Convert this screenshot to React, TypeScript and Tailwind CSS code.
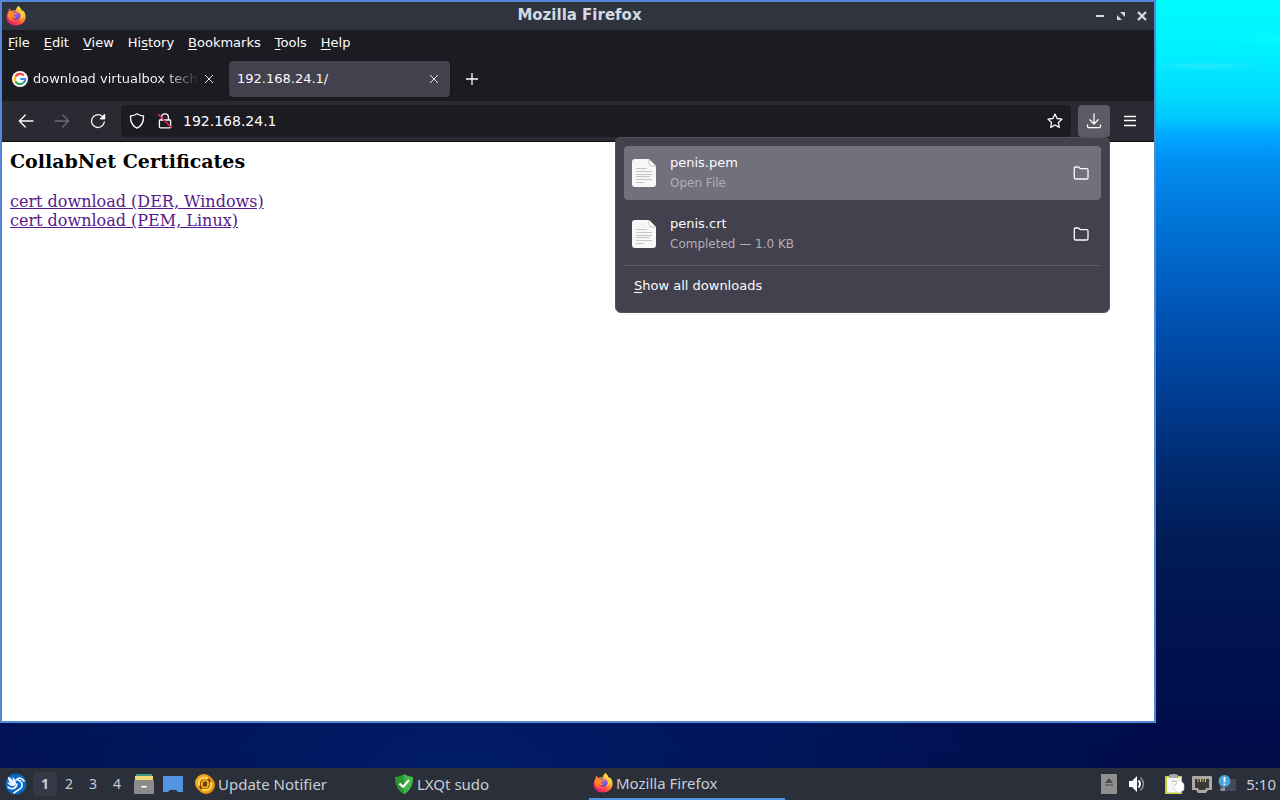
import { useState } from "react";

type Download = { name: string; status: string };

const menus = [
  { before: "", key: "F", after: "ile" },
  { before: "", key: "E", after: "dit" },
  { before: "", key: "V", after: "iew" },
  { before: "Hi", key: "s", after: "tory" },
  { before: "", key: "B", after: "ookmarks" },
  { before: "", key: "T", after: "ools" },
  { before: "", key: "H", after: "elp" },
];

const downloads: Download[] = [
  { name: "penis.pem", status: "Open File" },
  { name: "penis.crt", status: "Completed — 1.0 KB" },
];

function FirefoxLogo({ className }: { className: string }) {
  return (
    <svg viewBox="0 0 40 40" className={className} aria-hidden="true">
      <defs>
        <linearGradient id="flame" x1="0.85" y1="0.1" x2="0.2" y2="0.95">
          <stop offset="0.05" stopColor="#fff04a" />
          <stop offset="0.35" stopColor="#ffa42c" />
          <stop offset="0.65" stopColor="#ff4f42" />
          <stop offset="1" stopColor="#e6187a" />
        </linearGradient>
        <radialGradient id="globe" cx="0.6" cy="0.3" r="0.8">
          <stop offset="0" stopColor="#a65cf5" />
          <stop offset="1" stopColor="#5b45c8" />
        </radialGradient>
      </defs>
      <path
        d="M25 0c3 3 5 6 6 10l3-1c4 4 6 9 5 15-1 9-9 15-19 15C9 39 1 32 1 22c0-5 2-8 4-11l1-6c2 1 3 4 4 5 3-2 7-2 10-1 0-4 2-7 5-9z"
        fill="url(#flame)"
      />
      <path d="M13 12c3-2 7-2 9 1l4 1c4 3 4 8 1 11-4 4-11 3-12-2l-2-5 3-3-3-3z" fill="url(#globe)" />
      <path d="M6 11c3-2 7 0 9 2 2 0 6-1 7 2-1 2-5 2-6 3 0 3 3 3 5 4-3 4-8 2-11-1 0 5 4 9 10 9-8 2-16-4-16-11 0-3 1-6 2-8z" fill="#ff8a2a" />
      <path d="M25 0c-2 7 4 9 5 15 1 4 0 8-3 11 8-1 10-9 5-15-1-4-4-8-7-11z" fill="#ffd23c" />
    </svg>
  );
}

function GoogleLogo() {
  return (
    <svg viewBox="0 0 16 16" className="size-4 shrink-0" aria-hidden="true">
      <circle cx="8" cy="8" r="8" fill="#fff" />
      <g fill="none" strokeWidth="2.2">
        <path d="M11.8 4.4A5.2 5.2 0 0 0 3.5 5.4" stroke="#ea4335" />
        <path d="M3.5 5.4a5.2 5.2 0 0 0 0 5.2" stroke="#fbbc05" />
        <path d="M3.500 10.600a5.200 5.200 0 0 0 8 1.200" stroke="#34a853" />
        <path d="M11.500 11.800A5.200 5.200 0 0 0 13.200 8H8.200" stroke="#4285f4" />
      </g>
    </svg>
  );
}

function CloseIcon() {
  return (
    <svg viewBox="0 0 8 8" className="size-2" aria-hidden="true">
      <path d="M0 0l8 8M8 0L0 8" stroke="#e4e4ea" />
    </svg>
  );
}

function ToolbarIcon({ children }: { children: React.ReactNode }) {
  return (
    <svg
      viewBox="0 0 16 16"
      className="size-4"
      fill="none"
      stroke="currentColor"
      strokeWidth="1.3"
      strokeLinecap="round"
      strokeLinejoin="round"
      aria-hidden="true"
    >
      {children}
    </svg>
  );
}

function FileIcon() {
  return (
    <svg viewBox="0 0 24 28" className="h-7 w-6 shrink-0" aria-hidden="true">
      <path d="M3 0h14l7 7v18a3 3 0 0 1-3 3H3a3 3 0 0 1-3-3V3a3 3 0 0 1 3-3z" fill="#f7f7f7" />
      <path d="M17 0v4a3 3 0 0 0 3 3h4z" fill="#fff" stroke="#a9a9ad" strokeWidth="0.7" />
      <path d="M4 9.500h11M4 12.500h16M4 15.500h16M4 17.500h14M4 20.500h16M4 23.500h8" stroke="#c5c5c8" />
    </svg>
  );
}

function TitleBar() {
  return (
    <header className="flex h-7 items-center bg-[#2f343f] pr-0.5 pl-1 text-[#d3dae3]">
      <FirefoxLogo className="size-5" />
      <h1 className="flex-1 pb-0.5 pl-11 text-center font-['DejaVu_Sans',sans-serif] text-[15px] leading-5 font-bold">Mozilla Firefox</h1>
      <button type="button" aria-label="Minimize" className="flex h-5 w-[21px] items-center justify-center">
        <svg viewBox="0 0 10 10" className="size-2.5"><path d="M1 5h8" stroke="currentColor" strokeWidth="2" /></svg>
      </button>
      <button type="button" aria-label="Restore" className="flex h-5 w-[21px] items-center justify-center">
        <svg viewBox="0 0 10 10" className="size-2.5"><path d="M4 1h5v5zM1 4v5h5z" fill="currentColor" /></svg>
      </button>
      <button type="button" aria-label="Close window" className="flex h-5 w-[21px] items-center justify-center">
        <svg viewBox="0 0 10 10" className="size-2.5"><path d="M1 1l8 8M9 1L1 9" stroke="currentColor" strokeWidth="2.4" /></svg>
      </button>
    </header>
  );
}

function MenuBar() {
  return (
    <nav className="flex h-[26px] items-center gap-3.5 px-1.5 text-[13px] leading-4">
      {menus.map((m) => (
        <button type="button" key={m.key + m.after}>
          {m.before}
          <span className="underline underline-offset-2">{m.key}</span>
          {m.after}
        </button>
      ))}
    </nav>
  );
}

function TabStrip() {
  return (
    <div className="flex gap-1 px-0.5 pt-[5px] pb-1 text-[13px] leading-5">
      <div className="flex h-9 w-[221px] items-center pl-2">
        <GoogleLogo />
        <button
          type="button"
          className="ml-[5px] w-[166px] overflow-hidden bg-linear-to-r from-[#fbfbfe] from-80% to-transparent bg-clip-text text-left whitespace-nowrap text-transparent"
        >
          download virtualbox tech
        </button>
        <button type="button" aria-label="Close tab" className="flex w-5 justify-center"><CloseIcon /></button>
      </div>
      <div className="flex h-9 w-[221px] items-center justify-between rounded-sm bg-[#42414d] pr-1.5 pl-2 shadow-[0_0_2px_#0006]">
        <button type="button" className="flex-1 text-left">192.168.24.1/</button>
        <button type="button" aria-label="Close tab" className="flex w-5 justify-center"><CloseIcon /></button>
      </div>
      <button type="button" aria-label="New tab" className="flex size-9 items-center justify-center">
        <svg viewBox="0 0 12 12" className="size-3"><path d="M6 0v12M0 6h12" stroke="#fbfbfe" strokeWidth="1.3" /></svg>
      </button>
    </div>
  );
}

function DownloadsPanel() {
  return (
    <div className="absolute top-8 right-0 z-10 w-[495px] rounded-md border border-[#52525e] bg-[#42414d] p-2 text-[13px]">
      <ul className="flex flex-col gap-[7px]">
        {downloads.map((d, i) => (
          <li key={d.name} className={`flex h-[54px] items-center rounded-sm px-2 ${i === 0 ? "bg-[#72707b]" : ""}`}>
            <FileIcon />
            <button type="button" className="ml-3.5 flex-1 text-left">
              <span className="block leading-5">{d.name}</span>
              <span className="block text-xs leading-5 text-[#b0afb8]">{d.status}</span>
            </button>
            <button type="button" aria-label={`Show ${d.name} in folder`} className="flex w-6 justify-center">
              <ToolbarIcon>
                <path d="M1.300 12.700V3a1 1 0 0 1 1-1h3.200l2 1.700h6.200a1.300 1.300 0 0 1 1.300 1.300v7.700a1.300 1.300 0 0 1-1.300 1.300H2.600a1.300 1.300 0 0 1-1.300-1.300z" />
              </ToolbarIcon>
            </button>
          </li>
        ))}
      </ul>
      <hr className="mt-1 border-[#5b5b66]" />
      <button type="button" className="mt-0.5 flex h-9 w-full items-center px-2.5">
        <span className="underline underline-offset-2">S</span>how all downloads
      </button>
    </div>
  );
}

function Toolbar() {
  const [address, setAddress] = useState("192.168.24.1");
  const [open, setOpen] = useState(true);

  return (
    <div className="flex h-[41px] items-start border-b border-[#0c0c0d] bg-[#2b2a33] px-2 pt-1">
      <div className="flex gap-1">
        <button type="button" aria-label="Back" className="flex size-8 items-center justify-center">
          <ToolbarIcon><path d="M15 8H1.300M7.300 2l-6 6 6 6" /></ToolbarIcon>
        </button>
        <button type="button" aria-label="Forward" className="flex size-8 items-center justify-center text-[#6b6a74]">
          <ToolbarIcon><path d="M1 8h13.700M8.700 2l6 6-6 6" /></ToolbarIcon>
        </button>
        <button type="button" aria-label="Reload" className="flex size-8 items-center justify-center">
          <ToolbarIcon>
            <path d="M14.300 9A6.400 6.400 0 1 1 12 3.100l1.600 1.500" />
            <path d="M14.600 1.800v4h-4z" fill="currentColor" />
          </ToolbarIcon>
        </button>
      </div>
      <div className="ml-[7px] flex h-8 flex-1 items-center gap-2.5 rounded-sm bg-[#1c1b22] px-2">
        <div className="flex gap-3">
          <ToolbarIcon>
            <path d="M8 .8c2 1.500 4.200 2 6.500 2.200.3 5.500-1.500 9.800-6.500 12.200C3 12.800 1.200 8.500 1.500 3 3.800 2.800 6 2.300 8 .8z" />
          </ToolbarIcon>
          <ToolbarIcon>
            <path d="M4.600 7V4.200a3.400 3.400 0 0 1 6.800 0V7M3.200 7h9.600a.8.8 0 0 1 .8.8v6a1 1 0 0 1-1 1H3.400a1 1 0 0 1-1-1v-6a.8.8 0 0 1 .8-.8z" />
            <path d="M1.500 1.500l13 13" stroke="#e22850" strokeWidth="1.600" />
          </ToolbarIcon>
        </div>
        <input
          type="text"
          aria-label="Address"
          value={address}
          onChange={(e) => setAddress(e.target.value)}
          className="min-w-0 flex-1 bg-transparent text-sm outline-none"
        />
        <button type="button" aria-label="Bookmark this page">
          <ToolbarIcon>
            <path d="M8 1l2.100 4.500 4.900.6-3.600 3.400.9 4.900L8 12l-4.300 2.400.9-4.900L1 6.100l4.900-.6z" />
          </ToolbarIcon>
        </button>
      </div>
      <div className="relative ml-[7px]">
        <button
          type="button"
          aria-label="Downloads"
          aria-expanded={open}
          onClick={() => setOpen(!open)}
          className="flex size-8 items-center justify-center rounded-sm bg-[#5b5b66]"
        >
          <ToolbarIcon><path d="M8 .8v10M3.800 6.800L8 11l4.200-4.200M1.500 11.800v1.400a1.500 1.500 0 0 0 1.500 1.500h10a1.500 1.500 0 0 0 1.500-1.500v-1.400" /></ToolbarIcon>
        </button>
        {open && <DownloadsPanel />}
      </div>
      <button type="button" aria-label="Application menu" className="ml-1 flex size-8 items-center justify-center">
        <svg viewBox="0 0 12 12" className="size-3"><path d="M0 1.500h12M0 5.500h12M0 10.500h12" stroke="#fbfbfe" strokeWidth="1.300" /></svg>
      </button>
    </div>
  );
}

function Taskbar() {
  return (
    <footer className="flex h-8 items-center bg-[#2b2f3a] font-['Noto_Sans',sans-serif] text-[15px] leading-5 text-[#c8ced8]">
      <button type="button" aria-label="Application launcher" className="ml-[5px]">
        <svg viewBox="0 0 22 22" className="size-[22px]">
          <circle cx="11" cy="11" r="10.500" fill="#0968c4" />
          <path d="M3 4c2 0 4 2 5 4 0-2 0-3-1-4 3 1 4 4 4 7-1 2-2 2-4 2-2 0-4-2-5-4l3 1C4 9 3 7 3 4z" fill="#eef6ff" />
          <path d="M11 7c3-3 6-2 8 1M13 7c4 1 5 5 3 8-2 2-5 3-7 5M3 14c3 3 8 2 9-3" fill="none" stroke="#eef6ff" strokeWidth="1.700" strokeLinecap="round" />
        </svg>
      </button>
      <div className="ml-1.5 flex text-sm">
        {[1, 2, 3, 4].map((n) => (
          <button type="button" key={n} className={`h-6 w-6 rounded-sm ${n === 1 ? "bg-[#353946] font-bold" : ""}`}>
            {n}
          </button>
        ))}
      </div>
      <button type="button" aria-label="File manager" className="ml-1">
        <svg viewBox="0 0 22 22" className="size-[22px]">
          <path d="M3 1h16v4H3z" fill="#3c9d85" />
          <path d="M2 3h18v5H2z" fill="#f3d877" />
          <path d="M1 8l2-1h16l2 1v12a1 1 0 0 1-1 1H2a1 1 0 0 1-1-1z" fill="#8b8b8b" />
          <path d="M8 12.500h6v2.500H8z" fill="#fff" stroke="#777" strokeWidth="0.600" />
        </svg>
      </button>
      <button type="button" aria-label="Show desktop" className="ml-[7px]">
        <svg viewBox="0 0 22 22" className="size-[22px]">
          <path d="M1 3h20v16H1z" fill="#5294e2" />
          <path d="M6 19l2-2h6l2 2z" fill="#2b2f3a" />
        </svg>
      </button>
      <nav className="ml-[7px] flex h-full gap-[3px]">
        <button type="button" className="flex w-[196px] items-center gap-[3px] px-1">
          <svg viewBox="0 0 20 20" className="size-5" aria-hidden="true">
            <circle cx="9" cy="9" r="7.500" fill="none" stroke="#f5a81c" strokeWidth="3" />
            <circle cx="11" cy="11" r="7.500" fill="none" stroke="#e8940c" strokeWidth="3" />
            <circle cx="10" cy="10" r="6.500" fill="#6b400a" />
            <g fill="none" strokeLinecap="round">
              <path d="M4 11V9a5 5 0 0 1 5-5h3M16 9v2a5 5 0 0 1-5 5H8" stroke="#ffd45c" strokeWidth="2.400" />
              <path d="M8 13.500a2 2 0 0 1-1-2V9a2.500 2.500 0 0 1 2.500-2.500H12M12 6.500a2 2 0 0 1 1 2V11a2.500 2.500 0 0 1-2.500 2.500H8" stroke="#f5a81c" strokeWidth="2" />
            </g>
          </svg>
          Update Notifier
        </button>
        <button type="button" className="flex w-[196px] items-center gap-[3px] px-1">
          <svg viewBox="0 0 20 20" className="size-5" aria-hidden="true">
            <path d="M10 0c3 2 6 3 9 3 0 8-3 14-9 17C4 17 1 11 1 3c3 0 6-1 9-3z" fill="#2d9437" />
            <path d="M10 0v20c6-3 9-9 9-17-3 0-6-1-9-3z" fill="#43b64b" />
            <path d="M5.500 9.500l3.500 3.500L15 6" stroke="#fff" strokeWidth="2.200" fill="none" />
          </svg>
          LXQt sudo
        </button>
        <button type="button" className="flex w-[196px] items-center gap-[3px] border-b-2 border-[#5294e2] px-1">
          <FirefoxLogo className="size-5" />
          Mozilla Firefox
        </button>
      </nav>
      <div className="ml-auto flex items-center pr-1">
        <button type="button" aria-label="Removable media">
          <svg viewBox="0 0 16 20" className="h-5 w-4">
            <path d="M0 0h16v20H0z" fill="#8f8f8f" />
            <path d="M4 9l4-5 4 5zM4 10.500h8v1H4z" fill="#4b4b4b" />
          </svg>
        </button>
        <button type="button" aria-label="Volume" className="ml-3">
          <svg viewBox="0 0 16 16" className="size-4">
            <path d="M0 5h3l5-5v16l-5-5H0z" fill="#fff" />
            <path d="M9.500 4.500q3 3.500 0 7" stroke="#fff" strokeWidth="2" fill="none" />
            <path d="M11.500 1.500q6 6.500 0 13" stroke="#8b8f97" strokeWidth="1.500" fill="none" />
          </svg>
        </button>
        <button type="button" aria-label="Clipboard" className="ml-5">
          <svg viewBox="0 0 20 20" className="size-5">
            <path d="M0 2h17v18H0z" fill="#c2ce3a" />
            <path d="M2 3.500h14v15H2z" fill="#f8f8f3" />
            <path d="M4 1l3-1h3l3 1v3H4z" fill="#a6aaa8" />
            <path d="M7 7l8-1 4 4v6l-5 3-4-3z" fill="#fff" stroke="#c8c8c8" strokeWidth="0.600" />
            <path d="M7 7l5 1-2 4" fill="none" stroke="#bbb" />
          </svg>
        </button>
        <button type="button" aria-label="Network" className="ml-[7px]">
          <svg viewBox="0 0 20 20" className="size-5">
            <path d="M1 2h18a1 1 0 0 1 1 1v13h-4l-2 3H6l-2-3H0V3a1 1 0 0 1 1-1z" fill="#aaa9a7" />
            <path d="M3 5h14v9h-3l-1 2H7l-1-2H3z" fill="#3a3936" />
            <path d="M6 5v3M8.500 5v3M11 5v3M13.500 5v3" stroke="#e0c878" />
          </svg>
        </button>
        <button type="button" aria-label="Notifications" className="ml-1.5">
          <svg viewBox="0 0 20 20" className="size-5">
            <path d="M2 5h16v12H2z" fill="#424956" />
            <path d="M2 15l5-3v5H3z" fill="#8c929b" />
            <circle cx="6.500" cy="7" r="6" fill="#4ba3dd" />
            <path d="M6.500 3v5M6.500 9.500v1.500" stroke="#fff" strokeWidth="1.800" />
          </svg>
        </button>
        <time className="ml-2">5:10</time>
      </div>
    </footer>
  );
}

export default function App() {
  return (
    <div className="flex h-screen flex-col bg-[#000c46]">
      <div className="flex min-h-0 flex-1 bg-[radial-gradient(60px_5px_at_94%_66px,#60ecff66,transparent),radial-gradient(110px_7px_at_100%_38px,#00ffff99,transparent),radial-gradient(700px_260px_at_36%_100%,#002070cc,transparent),linear-gradient(#00fcff_0px,#00f0ff_50px,#00dcff_95px,#00c8ff_118px,#00a4ff_138px,#0090f0_160px,#007ce0_200px,#006acc_250px,#0050b0_325px,#003c90_400px,#002c74_460px,#001e5a_530px,#001450_610px,#000e4c_700px,#000c48_768px)] pr-[124px] pb-[45px]">
        <section className="flex flex-1 flex-col border-2 border-[#5288d6] bg-[#1c1b22] font-['DejaVu_Sans',sans-serif] text-[#fbfbfe]">
          <TitleBar />
          <MenuBar />
          <TabStrip />
          <Toolbar />
          <main className="flex-1 bg-white px-2 pt-2 font-['DejaVu_Serif',serif] text-base leading-[19px] text-[#551a8b]">
            <h2 className="mb-[19px] text-[19px] leading-[23px] font-bold text-black">CollabNet Certificates</h2>
            <p><a href="#der" className="underline">cert download (DER, Windows)</a></p>
            <p><a href="#pem" className="underline">cert download (PEM, Linux)</a></p>
          </main>
        </section>
      </div>
      <Taskbar />
    </div>
  );
}
